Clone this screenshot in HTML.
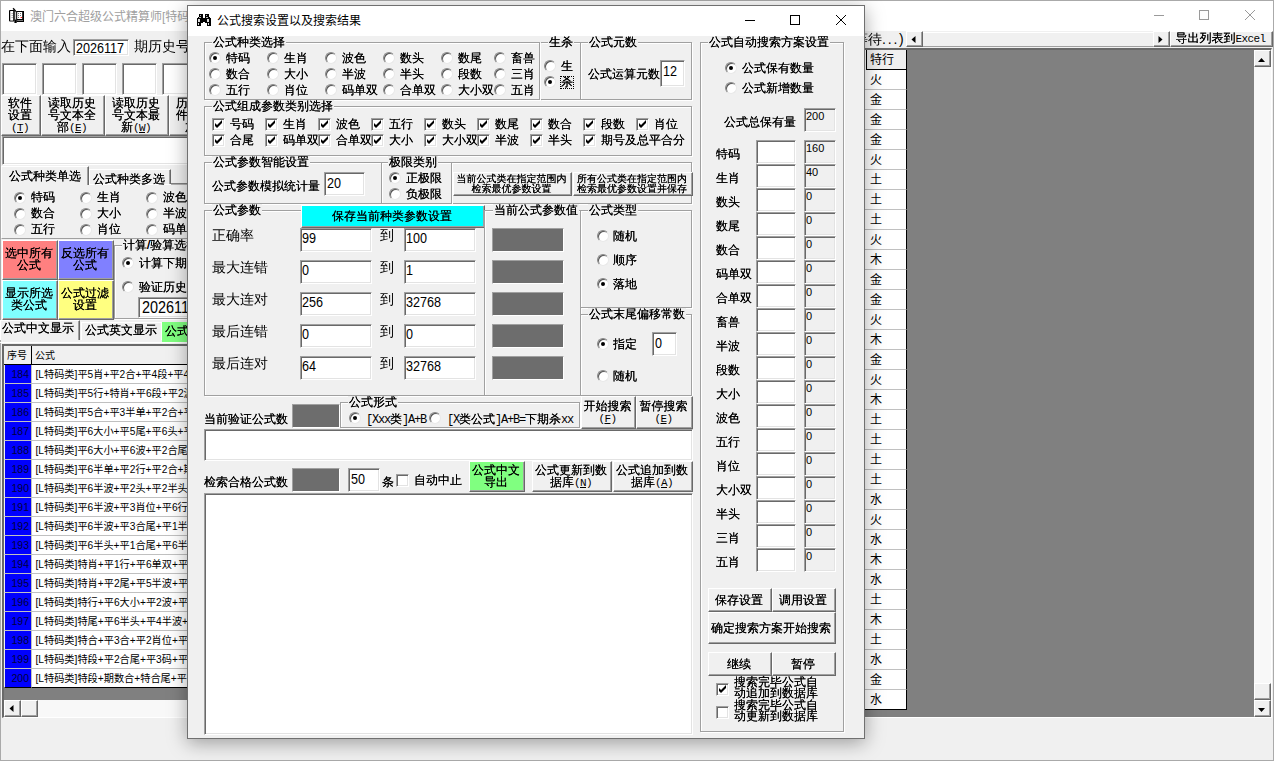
<!DOCTYPE html>
<html lang="zh-CN"><head><meta charset="utf-8"><title>公式搜索设置以及搜索结果</title>
<style>
*{margin:0;padding:0}
html,body{width:1274px;height:761px;overflow:hidden;background:#f0f0f0}
body{position:relative;font-family:"Liberation Sans","WenQuanYi Zen Hei",sans-serif;font-size:12px;color:#000}
.abs,.t,.ed,.bt,.rd,.cb,.gb,.gr,.tab{position:absolute;box-sizing:border-box}
.t{white-space:nowrap}
.s{font-family:"Liberation Sans","WenQuanYi Zen Hei",sans-serif;text-shadow:0 0 0 #000}
.y{font-family:"Liberation Sans","Noto Sans CJK SC",sans-serif}
.n{font-family:"Liberation Sans",sans-serif;display:inline-block;transform:scaleX(.9);transform-origin:0 50%}
.d{font-family:"Liberation Sans",sans-serif}
.l{font-family:"Liberation Mono",monospace;font-size:11px;letter-spacing:-.6px;text-shadow:none}
.m{font-family:"Liberation Mono","WenQuanYi Zen Hei",monospace;letter-spacing:-1.2px;text-shadow:none}
#main{position:absolute;left:0;top:0;width:1274px;height:761px;border:1px solid #aaa;box-sizing:border-box;background:#f0f0f0}
#main>*{margin-left:-1px;margin-top:-1px}
#dlg{position:absolute;left:187px;top:5px;width:678px;height:734px;border:1px solid #707070;box-sizing:border-box;background:#f0f0f0;box-shadow:0 4px 18px rgba(0,0,0,.35)}
.ed{border:1px solid;border-color:#a0a0a0 #fff #fff #a0a0a0;box-shadow:inset 1px 1px 0 #696969,inset -1px -1px 0 #e3e3e3;overflow:hidden}
.gr{background:#6d6d6d;border:1px solid;border-color:#a0a0a0 #fff #fff #a0a0a0}
.bt{padding:0 2px 1px 0;background:#f0f0f0;border:1px solid;border-color:#fff #696969 #696969 #fff;box-shadow:inset -1px -1px 0 #a0a0a0;display:flex;align-items:center;justify-content:center;text-align:center;white-space:nowrap}
.bt>span{display:block}
.bt u{text-decoration:underline}
.rd{width:12px;height:12px;border-radius:50%;background:#fff;border:1px solid;border-color:#888 #e8e8e8 #e8e8e8 #888;box-shadow:inset 1px 1px 0 #555}
.rd.on::after{content:"";position:absolute;left:3px;top:3px;width:4px;height:4px;border-radius:50%;background:#000}
.cb{width:13px;height:13px;background:#fff;border:1px solid;border-color:#a0a0a0 #fff #fff #a0a0a0;box-shadow:inset 1px 1px 0 #696969,inset -1px -1px 0 #e3e3e3}
.cb svg{position:absolute;left:-1px;top:-1px}
.gb{border:1px solid #dcdcdc;box-shadow:1px 1px 0 #fff;width:0;height:0;box-sizing:content-box}
.tab{border:1px solid;border-color:#fff #696969 transparent #fff;border-bottom:none;background:#f0f0f0;box-shadow:inset -1px 0 0 #a0a0a0}
.sbtrack{background:#f8f8f8}
</style></head>
<body>
<div id="main">
<div class="abs" style="left:1px;top:1px;width:1272px;height:30px;background:#fff"></div>
<svg class="abs" style="left:8px;top:7px" width="16" height="16" viewBox="0 0 16 16">
<path d="M5.1 1.2L8 4.6" stroke="#000" stroke-width="1.4"/>
<rect x="8.5" y="4" width="7.5" height="11" fill="#000"/>
<rect x="9.2" y="5" width="5" height="7" fill="#fff"/>
<rect x="10" y="6" width="1" height="1" fill="#777"/><rect x="12" y="6" width="1" height="1" fill="#777"/>
<rect x="10" y="8" width="1" height="1" fill="#777"/><rect x="12" y="8" width="1" height="1" fill="#777"/>
<rect x="10" y="10" width="1" height="1" fill="#777"/><rect x="12.6" y="10" width="1.3" height="1" fill="#f00"/>
<rect x="9.2" y="13.1" width="5.8" height="0.8" fill="#999"/>
<rect x="1" y="3" width="5.6" height="11.5" rx="1" fill="#000"/>
<rect x="2.2" y="4" width="3" height="9.6" fill="#fff"/>
<rect x="3.6" y="6" width="1" height="1" fill="#888"/><rect x="3.6" y="8" width="1" height="1" fill="#888"/><rect x="3.6" y="10" width="1" height="1" fill="#888"/>
<rect x="6.4" y="4" width="2.3" height="12" fill="#000"/>
<rect x="6.9" y="4.6" width="0.9" height="8" fill="#fff"/>
</svg>
<div class="t y" style="left:30px;top:10px;font-size:12px;line-height:12px;color:#a0a0a0;line-height:15px;">澳门六合超级公式精算师[特码</div>
<svg class="abs" style="left:1150px;top:6px" width="112" height="20" viewBox="0 0 112 20" fill="none" stroke="#9a9a9a" stroke-width="1">
<path d="M4 9.5h10"/><rect x="49.5" y="4.5" width="9" height="9"/><path d="M95 4l10 10M105 4l-10 10"/></svg>
<div class="t s" style="left:1px;top:39px;font-size:14px;line-height:14px;text-shadow:none;">在下面输入</div>
<div class="ed" style="left:73px;top:39px;width:56px;height:17px;background:#fff;"><span class="t n" style="left:2px;top:1px;font-size:14px;line-height:14px">2026117</span></div>
<div class="t s" style="left:134px;top:39px;font-size:14px;line-height:14px;text-shadow:none;">期历史号</div>
<div class="ed" style="left:2px;top:63px;width:35px;height:32px;background:#fff;"></div>
<div class="ed" style="left:42px;top:63px;width:35px;height:32px;background:#fff;"></div>
<div class="ed" style="left:82px;top:63px;width:35px;height:32px;background:#fff;"></div>
<div class="ed" style="left:122px;top:63px;width:35px;height:32px;background:#fff;"></div>
<div class="ed" style="left:162px;top:63px;width:35px;height:32px;background:#fff;"></div>
<div class="bt s" style="left:1px;top:95px;width:40px;height:41px;font-size:12px;line-height:12px;"><span>软件<br>设置<br><span class="l">(<u>T</u>)</span></span></div>
<div class="bt s" style="left:41px;top:95px;width:64px;height:41px;font-size:12px;line-height:12px;"><span>读取历史<br>号文本全<br>部<span class="l">(<u>E</u>)</span></span></div>
<div class="bt s" style="left:105px;top:95px;width:64px;height:41px;font-size:12px;line-height:12px;"><span>读取历史<br>号文本最<br>新<span class="l">(<u>W</u>)</span></span></div>
<div class="bt s" style="left:169px;top:95px;width:64px;height:41px;font-size:12px;line-height:12px;"><span>历史号文<br>件文本追<br>加<span class="l">(<u>B</u>)</span></span></div>
<div class="ed" style="left:2px;top:136px;width:300px;height:29px;background:#fff;"></div>
<div class="abs" style="left:1px;top:184px;width:300px;height:55px;border-top:1px solid #fff;border-left:1px solid #fff;border-bottom:1px solid #a0a0a0;box-sizing:border-box"></div>
<div class="tab" style="left:89px;top:169px;width:82px;height:15px"></div>
<div class="abs" style="left:171px;top:183px;width:20px;height:2px;background:#808080;border-bottom:1px solid #b0b0b0"></div>
<div class="tab sel" style="left:1px;top:166px;width:88px;height:19px"></div>
<div class="t s" style="left:9px;top:170px;font-size:12px;line-height:12px;">公式种类单选</div>
<div class="t s" style="left:93px;top:173px;font-size:12px;line-height:12px;">公式种类多选</div>
<div class="rd on" style="left:14px;top:192px"></div>
<div class="t s" style="left:31px;top:191px;font-size:12px;line-height:12px;">特码</div>
<div class="rd" style="left:80px;top:192px"></div>
<div class="t s" style="left:97px;top:191px;font-size:12px;line-height:12px;">生肖</div>
<div class="rd" style="left:146px;top:192px"></div>
<div class="t s" style="left:163px;top:191px;font-size:12px;line-height:12px;">波色</div>
<div class="rd" style="left:14px;top:208px"></div>
<div class="t s" style="left:31px;top:207px;font-size:12px;line-height:12px;">数合</div>
<div class="rd" style="left:80px;top:208px"></div>
<div class="t s" style="left:97px;top:207px;font-size:12px;line-height:12px;">大小</div>
<div class="rd" style="left:146px;top:208px"></div>
<div class="t s" style="left:163px;top:207px;font-size:12px;line-height:12px;">半波</div>
<div class="rd" style="left:14px;top:224px"></div>
<div class="t s" style="left:31px;top:223px;font-size:12px;line-height:12px;">五行</div>
<div class="rd" style="left:80px;top:224px"></div>
<div class="t s" style="left:97px;top:223px;font-size:12px;line-height:12px;">肖位</div>
<div class="rd" style="left:146px;top:224px"></div>
<div class="t s" style="left:163px;top:223px;font-size:12px;line-height:12px;">码单双</div>
<div class="bt s" style="left:2px;top:240px;width:56px;height:40px;font-size:12px;line-height:12px;background:#ff8080;padding-bottom:2px;"><span>选中所有<br>公式</span></div>
<div class="bt s" style="left:58px;top:240px;width:56px;height:40px;font-size:12px;line-height:12px;background:#8080ff;padding-bottom:2px;"><span>反选所有<br>公式</span></div>
<div class="bt s" style="left:2px;top:280px;width:56px;height:40px;font-size:12px;line-height:12px;background:#80ffff;padding-bottom:2px;"><span>显示所选<br>类公式</span></div>
<div class="bt s" style="left:58px;top:280px;width:56px;height:40px;font-size:12px;line-height:12px;background:#ffff80;padding-bottom:2px;"><span>公式过滤<br>设置</span></div>
<div class="abs" style="left:115px;top:246px;width:207px;height:74px;border-top:1px solid #fff;border-left:1px solid #fff;border-bottom:1px solid #fff;border-right:1px solid #fff;"></div>
<div class="abs" style="left:114px;top:245px;width:207px;height:74px;border-top:1px solid #a0a0a0;border-left:1px solid #a0a0a0;border-bottom:1px solid #a0a0a0;border-right:1px solid #a0a0a0;"></div>
<div class="t s" style="left:122px;top:239px;font-size:12px;line-height:12px;height:13px;background:#f0f0f0;padding:0 1px">计算/验算选择</div>
<div class="rd on" style="left:122px;top:257px"></div>
<div class="t s" style="left:139px;top:257px;font-size:12px;line-height:12px;">计算下期</div>
<div class="rd" style="left:122px;top:281px"></div>
<div class="t s" style="left:139px;top:281px;font-size:12px;line-height:12px;">验证历史</div>
<div class="ed" style="left:138px;top:297px;width:80px;height:21px;background:#fff;"><span class="t n" style="left:3px;top:2px;font-size:16px;line-height:16px">2026117</span></div>
<div class="abs" style="left:0px;top:342px;width:300px;height:1px;background:#fff"></div>
<div class="tab" style="left:81px;top:322px;width:81px;height:18px;border-right-color:#fff;box-shadow:none"></div>
<div class="abs" style="left:162px;top:322px;width:60px;height:20px;background:#80ff80"></div>
<div class="tab sel" style="left:0px;top:320px;width:80px;height:20px"></div>
<div class="t s" style="left:2px;top:322px;font-size:12px;line-height:12px;">公式中文显示</div>
<div class="t s" style="left:85px;top:324px;font-size:12px;line-height:12px;">公式英文显示</div>
<div class="t s" style="left:165px;top:325px;font-size:12px;line-height:12px;">公式</div>
<div class="abs" style="left:2px;top:344px;width:300px;height:374px;background:#808080;border-left:2px solid #696969;border-top:2px solid #696969;border-bottom:1px solid #fff;box-sizing:border-box"></div>
<div class="abs" style="left:4px;top:346px;width:28px;height:19px;background:#f0f0f0;border-right:1px solid #000;border-bottom:1px solid #000;box-sizing:border-box"></div>
<div class="abs" style="left:32px;top:346px;width:270px;height:19px;background:#f0f0f0;border-bottom:1px solid #000;box-sizing:border-box"></div>
<div class="t y" style="left:7px;top:349px;font-size:10px;line-height:10px;line-height:13px;">序号</div>
<div class="t y" style="left:35px;top:349px;font-size:10px;line-height:10px;line-height:13px;">公式</div>
<div class="abs" style="left:4px;top:365px;width:28px;height:19px;background:#00f;border-bottom:1px solid #c0c0c0;border-right:1px solid #c0c0c0;border-left:1px solid #f0f0f0;box-sizing:border-box"></div>
<div class="abs" style="left:32px;top:365px;width:270px;height:19px;background:#fff;border-bottom:1px solid #c0c0c0;box-sizing:border-box"></div>
<div class="t y" style="left:10px;top:368px;font-size:10.5px;line-height:10.5px;color:#000040;line-height:13px;width:19px;text-align:right;">184</div>
<div class="t y" style="left:35.5px;top:368px;font-size:10.2px;line-height:10.2px;line-height:13px;">[L特码类]平5肖+平2合+平4段+平4尾</div>
<div class="abs" style="left:4px;top:384px;width:28px;height:19px;background:#00f;border-bottom:1px solid #c0c0c0;border-right:1px solid #c0c0c0;border-left:1px solid #f0f0f0;box-sizing:border-box"></div>
<div class="abs" style="left:32px;top:384px;width:270px;height:19px;background:#fff;border-bottom:1px solid #c0c0c0;box-sizing:border-box"></div>
<div class="t y" style="left:10px;top:387px;font-size:10.5px;line-height:10.5px;color:#000040;line-height:13px;width:19px;text-align:right;">185</div>
<div class="t y" style="left:35.5px;top:387px;font-size:10.2px;line-height:10.2px;line-height:13px;">[L特码类]平5行+特肖+平6段+平2波</div>
<div class="abs" style="left:4px;top:403px;width:28px;height:19px;background:#00f;border-bottom:1px solid #c0c0c0;border-right:1px solid #c0c0c0;border-left:1px solid #f0f0f0;box-sizing:border-box"></div>
<div class="abs" style="left:32px;top:403px;width:270px;height:19px;background:#fff;border-bottom:1px solid #c0c0c0;box-sizing:border-box"></div>
<div class="t y" style="left:10px;top:406px;font-size:10.5px;line-height:10.5px;color:#000040;line-height:13px;width:19px;text-align:right;">186</div>
<div class="t y" style="left:35.5px;top:406px;font-size:10.2px;line-height:10.2px;line-height:13px;">[L特码类]平5合+平3半单+平2合+平</div>
<div class="abs" style="left:4px;top:422px;width:28px;height:19px;background:#00f;border-bottom:1px solid #c0c0c0;border-right:1px solid #c0c0c0;border-left:1px solid #f0f0f0;box-sizing:border-box"></div>
<div class="abs" style="left:32px;top:422px;width:270px;height:19px;background:#fff;border-bottom:1px solid #c0c0c0;box-sizing:border-box"></div>
<div class="t y" style="left:10px;top:425px;font-size:10.5px;line-height:10.5px;color:#000040;line-height:13px;width:19px;text-align:right;">187</div>
<div class="t y" style="left:35.5px;top:425px;font-size:10.2px;line-height:10.2px;line-height:13px;">[L特码类]平6大小+平5尾+平6头+平</div>
<div class="abs" style="left:4px;top:441px;width:28px;height:19px;background:#00f;border-bottom:1px solid #c0c0c0;border-right:1px solid #c0c0c0;border-left:1px solid #f0f0f0;box-sizing:border-box"></div>
<div class="abs" style="left:32px;top:441px;width:270px;height:19px;background:#fff;border-bottom:1px solid #c0c0c0;box-sizing:border-box"></div>
<div class="t y" style="left:10px;top:444px;font-size:10.5px;line-height:10.5px;color:#000040;line-height:13px;width:19px;text-align:right;">188</div>
<div class="t y" style="left:35.5px;top:444px;font-size:10.2px;line-height:10.2px;line-height:13px;">[L特码类]平6大小+平6波+平2合尾</div>
<div class="abs" style="left:4px;top:460px;width:28px;height:19px;background:#00f;border-bottom:1px solid #c0c0c0;border-right:1px solid #c0c0c0;border-left:1px solid #f0f0f0;box-sizing:border-box"></div>
<div class="abs" style="left:32px;top:460px;width:270px;height:19px;background:#fff;border-bottom:1px solid #c0c0c0;box-sizing:border-box"></div>
<div class="t y" style="left:10px;top:463px;font-size:10.5px;line-height:10.5px;color:#000040;line-height:13px;width:19px;text-align:right;">189</div>
<div class="t y" style="left:35.5px;top:463px;font-size:10.2px;line-height:10.2px;line-height:13px;">[L特码类]平6半单+平2行+平2合+期</div>
<div class="abs" style="left:4px;top:479px;width:28px;height:19px;background:#00f;border-bottom:1px solid #c0c0c0;border-right:1px solid #c0c0c0;border-left:1px solid #f0f0f0;box-sizing:border-box"></div>
<div class="abs" style="left:32px;top:479px;width:270px;height:19px;background:#fff;border-bottom:1px solid #c0c0c0;box-sizing:border-box"></div>
<div class="t y" style="left:10px;top:482px;font-size:10.5px;line-height:10.5px;color:#000040;line-height:13px;width:19px;text-align:right;">190</div>
<div class="t y" style="left:35.5px;top:482px;font-size:10.2px;line-height:10.2px;line-height:13px;">[L特码类]平6半波+平2头+平2半头</div>
<div class="abs" style="left:4px;top:498px;width:28px;height:19px;background:#00f;border-bottom:1px solid #c0c0c0;border-right:1px solid #c0c0c0;border-left:1px solid #f0f0f0;box-sizing:border-box"></div>
<div class="abs" style="left:32px;top:498px;width:270px;height:19px;background:#fff;border-bottom:1px solid #c0c0c0;box-sizing:border-box"></div>
<div class="t y" style="left:10px;top:501px;font-size:10.5px;line-height:10.5px;color:#000040;line-height:13px;width:19px;text-align:right;">191</div>
<div class="t y" style="left:35.5px;top:501px;font-size:10.2px;line-height:10.2px;line-height:13px;">[L特码类]平6半波+平3肖位+平6行</div>
<div class="abs" style="left:4px;top:517px;width:28px;height:19px;background:#00f;border-bottom:1px solid #c0c0c0;border-right:1px solid #c0c0c0;border-left:1px solid #f0f0f0;box-sizing:border-box"></div>
<div class="abs" style="left:32px;top:517px;width:270px;height:19px;background:#fff;border-bottom:1px solid #c0c0c0;box-sizing:border-box"></div>
<div class="t y" style="left:10px;top:520px;font-size:10.5px;line-height:10.5px;color:#000040;line-height:13px;width:19px;text-align:right;">192</div>
<div class="t y" style="left:35.5px;top:520px;font-size:10.2px;line-height:10.2px;line-height:13px;">[L特码类]平6半波+平3合尾+平1半</div>
<div class="abs" style="left:4px;top:536px;width:28px;height:19px;background:#00f;border-bottom:1px solid #c0c0c0;border-right:1px solid #c0c0c0;border-left:1px solid #f0f0f0;box-sizing:border-box"></div>
<div class="abs" style="left:32px;top:536px;width:270px;height:19px;background:#fff;border-bottom:1px solid #c0c0c0;box-sizing:border-box"></div>
<div class="t y" style="left:10px;top:539px;font-size:10.5px;line-height:10.5px;color:#000040;line-height:13px;width:19px;text-align:right;">193</div>
<div class="t y" style="left:35.5px;top:539px;font-size:10.2px;line-height:10.2px;line-height:13px;">[L特码类]平6半头+平1合尾+平6半</div>
<div class="abs" style="left:4px;top:555px;width:28px;height:19px;background:#00f;border-bottom:1px solid #c0c0c0;border-right:1px solid #c0c0c0;border-left:1px solid #f0f0f0;box-sizing:border-box"></div>
<div class="abs" style="left:32px;top:555px;width:270px;height:19px;background:#fff;border-bottom:1px solid #c0c0c0;box-sizing:border-box"></div>
<div class="t y" style="left:10px;top:558px;font-size:10.5px;line-height:10.5px;color:#000040;line-height:13px;width:19px;text-align:right;">194</div>
<div class="t y" style="left:35.5px;top:558px;font-size:10.2px;line-height:10.2px;line-height:13px;">[L特码类]特肖+平1行+平6单双+平</div>
<div class="abs" style="left:4px;top:574px;width:28px;height:19px;background:#00f;border-bottom:1px solid #c0c0c0;border-right:1px solid #c0c0c0;border-left:1px solid #f0f0f0;box-sizing:border-box"></div>
<div class="abs" style="left:32px;top:574px;width:270px;height:19px;background:#fff;border-bottom:1px solid #c0c0c0;box-sizing:border-box"></div>
<div class="t y" style="left:10px;top:577px;font-size:10.5px;line-height:10.5px;color:#000040;line-height:13px;width:19px;text-align:right;">195</div>
<div class="t y" style="left:35.5px;top:577px;font-size:10.2px;line-height:10.2px;line-height:13px;">[L特码类]特肖+平2尾+平5半波+平</div>
<div class="abs" style="left:4px;top:593px;width:28px;height:19px;background:#00f;border-bottom:1px solid #c0c0c0;border-right:1px solid #c0c0c0;border-left:1px solid #f0f0f0;box-sizing:border-box"></div>
<div class="abs" style="left:32px;top:593px;width:270px;height:19px;background:#fff;border-bottom:1px solid #c0c0c0;box-sizing:border-box"></div>
<div class="t y" style="left:10px;top:596px;font-size:10.5px;line-height:10.5px;color:#000040;line-height:13px;width:19px;text-align:right;">196</div>
<div class="t y" style="left:35.5px;top:596px;font-size:10.2px;line-height:10.2px;line-height:13px;">[L特码类]特行+平6大小+平2波+平</div>
<div class="abs" style="left:4px;top:612px;width:28px;height:19px;background:#00f;border-bottom:1px solid #c0c0c0;border-right:1px solid #c0c0c0;border-left:1px solid #f0f0f0;box-sizing:border-box"></div>
<div class="abs" style="left:32px;top:612px;width:270px;height:19px;background:#fff;border-bottom:1px solid #c0c0c0;box-sizing:border-box"></div>
<div class="t y" style="left:10px;top:615px;font-size:10.5px;line-height:10.5px;color:#000040;line-height:13px;width:19px;text-align:right;">197</div>
<div class="t y" style="left:35.5px;top:615px;font-size:10.2px;line-height:10.2px;line-height:13px;">[L特码类]特尾+平6半头+平4半波+</div>
<div class="abs" style="left:4px;top:631px;width:28px;height:19px;background:#00f;border-bottom:1px solid #c0c0c0;border-right:1px solid #c0c0c0;border-left:1px solid #f0f0f0;box-sizing:border-box"></div>
<div class="abs" style="left:32px;top:631px;width:270px;height:19px;background:#fff;border-bottom:1px solid #c0c0c0;box-sizing:border-box"></div>
<div class="t y" style="left:10px;top:634px;font-size:10.5px;line-height:10.5px;color:#000040;line-height:13px;width:19px;text-align:right;">198</div>
<div class="t y" style="left:35.5px;top:634px;font-size:10.2px;line-height:10.2px;line-height:13px;">[L特码类]特合+平3合+平2肖位+平</div>
<div class="abs" style="left:4px;top:650px;width:28px;height:19px;background:#00f;border-bottom:1px solid #c0c0c0;border-right:1px solid #c0c0c0;border-left:1px solid #f0f0f0;box-sizing:border-box"></div>
<div class="abs" style="left:32px;top:650px;width:270px;height:19px;background:#fff;border-bottom:1px solid #c0c0c0;box-sizing:border-box"></div>
<div class="t y" style="left:10px;top:653px;font-size:10.5px;line-height:10.5px;color:#000040;line-height:13px;width:19px;text-align:right;">199</div>
<div class="t y" style="left:35.5px;top:653px;font-size:10.2px;line-height:10.2px;line-height:13px;">[L特码类]特段+平2合尾+平3码+平</div>
<div class="abs" style="left:4px;top:669px;width:28px;height:19px;background:#00f;border-bottom:1px solid #000;border-right:1px solid #c0c0c0;border-left:1px solid #f0f0f0;box-sizing:border-box"></div>
<div class="abs" style="left:32px;top:669px;width:270px;height:19px;background:#fff;border-bottom:1px solid #000;box-sizing:border-box"></div>
<div class="t y" style="left:10px;top:672px;font-size:10.5px;line-height:10.5px;color:#000040;line-height:13px;width:19px;text-align:right;">200</div>
<div class="t y" style="left:35.5px;top:672px;font-size:10.2px;line-height:10.2px;line-height:13px;">[L特码类]特段+期数合+特合尾+平</div>
<div class="abs sbtrack" style="left:4px;top:700px;width:300px;height:17px"></div>
<div class="bt s" style="left:4px;top:700px;width:17px;height:17px;font-size:12px;line-height:12px;"><span><svg width="5" height="7" viewBox="0 0 5 7"><path d="M4.5 0v7L0.5 3.5z" fill="#000"/></svg></span></div>
<div class="bt s" style="left:21px;top:700px;width:17px;height:17px;font-size:12px;line-height:12px;"><span></span></div>
<div class="t s" style="left:854px;top:32px;font-size:14px;line-height:14px;text-shadow:none;">等待<span style="letter-spacing:1.8px">...</span>)</div>
<div class="abs" style="left:906px;top:32px;width:264px;height:15px;background:#f0f0f0;border-top:1px solid #fff;border-bottom:1px solid #a0a0a0;box-sizing:border-box"></div>
<div class="bt s" style="left:906px;top:31px;width:17px;height:16px;font-size:12px;line-height:12px;"><span><svg width="5" height="7" viewBox="0 0 5 7"><path d="M4.5 0v7L0.5 3.5z" fill="#000"/></svg></span></div>
<div class="bt s" style="left:1153px;top:31px;width:17px;height:16px;font-size:12px;line-height:12px;"><span><svg width="5" height="7" viewBox="0 0 5 7"><path d="M0.5 0v7L4.5 3.5z" fill="#000"/></svg></span></div>
<div class="bt s" style="left:1170px;top:31px;width:103px;height:16px;font-size:12px;line-height:12px;"><span>导出列表到<span class="l">Excel</span></span></div>
<div class="abs" style="left:860px;top:48px;width:412px;height:670px;background:#808080;border-top:2px solid #696969;border-right:1px solid #fff;border-bottom:1px solid #fff;box-sizing:border-box"></div>
<div class="abs sbtrack" style="left:1254px;top:50px;width:17px;height:666px"></div>
<div class="bt s" style="left:1254px;top:50px;width:17px;height:17px;font-size:12px;line-height:12px;"><span><svg width="7" height="4" viewBox="0 0 7 4"><path d="M0 4h7L3.5 0z" fill="#000"/></svg></span></div>
<div class="bt s" style="left:1254px;top:683px;width:17px;height:17px;font-size:12px;line-height:12px;"><span></span></div>
<div class="bt s" style="left:1254px;top:700px;width:17px;height:17px;font-size:12px;line-height:12px;"><span><svg width="7" height="4" viewBox="0 0 7 4"><path d="M0 0h7L3.5 4z" fill="#000"/></svg></span></div>
<div class="abs" style="left:862px;top:50px;width:45px;height:660px;background:#fff"></div>
<div class="abs" style="left:866px;top:50px;width:41px;height:20px;background:#f0f0f0;border-right:1px solid #000;border-bottom:1px solid #000;border-left:1px solid #000;box-sizing:border-box"></div>
<div class="t y" style="left:870px;top:52px;font-size:12px;line-height:12px;line-height:16px;">特行</div>
<div class="abs" style="left:862px;top:70px;width:45px;height:20px;border-bottom:1px solid #c0c0c0;border-right:1px solid #000;box-sizing:border-box"></div>
<div class="t y" style="left:870px;top:72px;font-size:12px;line-height:12px;line-height:16px;">火</div>
<div class="abs" style="left:862px;top:90px;width:45px;height:20px;border-bottom:1px solid #c0c0c0;border-right:1px solid #000;box-sizing:border-box"></div>
<div class="t y" style="left:870px;top:92px;font-size:12px;line-height:12px;line-height:16px;">金</div>
<div class="abs" style="left:862px;top:110px;width:45px;height:20px;border-bottom:1px solid #c0c0c0;border-right:1px solid #000;box-sizing:border-box"></div>
<div class="t y" style="left:870px;top:112px;font-size:12px;line-height:12px;line-height:16px;">金</div>
<div class="abs" style="left:862px;top:130px;width:45px;height:20px;border-bottom:1px solid #c0c0c0;border-right:1px solid #000;box-sizing:border-box"></div>
<div class="t y" style="left:870px;top:132px;font-size:12px;line-height:12px;line-height:16px;">金</div>
<div class="abs" style="left:862px;top:150px;width:45px;height:20px;border-bottom:1px solid #c0c0c0;border-right:1px solid #000;box-sizing:border-box"></div>
<div class="t y" style="left:870px;top:152px;font-size:12px;line-height:12px;line-height:16px;">火</div>
<div class="abs" style="left:862px;top:170px;width:45px;height:20px;border-bottom:1px solid #c0c0c0;border-right:1px solid #000;box-sizing:border-box"></div>
<div class="t y" style="left:870px;top:172px;font-size:12px;line-height:12px;line-height:16px;">土</div>
<div class="abs" style="left:862px;top:190px;width:45px;height:20px;border-bottom:1px solid #c0c0c0;border-right:1px solid #000;box-sizing:border-box"></div>
<div class="t y" style="left:870px;top:192px;font-size:12px;line-height:12px;line-height:16px;">土</div>
<div class="abs" style="left:862px;top:210px;width:45px;height:20px;border-bottom:1px solid #c0c0c0;border-right:1px solid #000;box-sizing:border-box"></div>
<div class="t y" style="left:870px;top:212px;font-size:12px;line-height:12px;line-height:16px;">土</div>
<div class="abs" style="left:862px;top:230px;width:45px;height:20px;border-bottom:1px solid #c0c0c0;border-right:1px solid #000;box-sizing:border-box"></div>
<div class="t y" style="left:870px;top:232px;font-size:12px;line-height:12px;line-height:16px;">火</div>
<div class="abs" style="left:862px;top:250px;width:45px;height:20px;border-bottom:1px solid #c0c0c0;border-right:1px solid #000;box-sizing:border-box"></div>
<div class="t y" style="left:870px;top:252px;font-size:12px;line-height:12px;line-height:16px;">木</div>
<div class="abs" style="left:862px;top:270px;width:45px;height:20px;border-bottom:1px solid #c0c0c0;border-right:1px solid #000;box-sizing:border-box"></div>
<div class="t y" style="left:870px;top:272px;font-size:12px;line-height:12px;line-height:16px;">金</div>
<div class="abs" style="left:862px;top:290px;width:45px;height:20px;border-bottom:1px solid #c0c0c0;border-right:1px solid #000;box-sizing:border-box"></div>
<div class="t y" style="left:870px;top:292px;font-size:12px;line-height:12px;line-height:16px;">金</div>
<div class="abs" style="left:862px;top:310px;width:45px;height:20px;border-bottom:1px solid #c0c0c0;border-right:1px solid #000;box-sizing:border-box"></div>
<div class="t y" style="left:870px;top:312px;font-size:12px;line-height:12px;line-height:16px;">火</div>
<div class="abs" style="left:862px;top:330px;width:45px;height:20px;border-bottom:1px solid #c0c0c0;border-right:1px solid #000;box-sizing:border-box"></div>
<div class="t y" style="left:870px;top:332px;font-size:12px;line-height:12px;line-height:16px;">木</div>
<div class="abs" style="left:862px;top:350px;width:45px;height:20px;border-bottom:1px solid #c0c0c0;border-right:1px solid #000;box-sizing:border-box"></div>
<div class="t y" style="left:870px;top:352px;font-size:12px;line-height:12px;line-height:16px;">金</div>
<div class="abs" style="left:862px;top:370px;width:45px;height:20px;border-bottom:1px solid #c0c0c0;border-right:1px solid #000;box-sizing:border-box"></div>
<div class="t y" style="left:870px;top:372px;font-size:12px;line-height:12px;line-height:16px;">火</div>
<div class="abs" style="left:862px;top:390px;width:45px;height:20px;border-bottom:1px solid #c0c0c0;border-right:1px solid #000;box-sizing:border-box"></div>
<div class="t y" style="left:870px;top:392px;font-size:12px;line-height:12px;line-height:16px;">木</div>
<div class="abs" style="left:862px;top:410px;width:45px;height:20px;border-bottom:1px solid #c0c0c0;border-right:1px solid #000;box-sizing:border-box"></div>
<div class="t y" style="left:870px;top:412px;font-size:12px;line-height:12px;line-height:16px;">土</div>
<div class="abs" style="left:862px;top:430px;width:45px;height:20px;border-bottom:1px solid #c0c0c0;border-right:1px solid #000;box-sizing:border-box"></div>
<div class="t y" style="left:870px;top:432px;font-size:12px;line-height:12px;line-height:16px;">土</div>
<div class="abs" style="left:862px;top:450px;width:45px;height:20px;border-bottom:1px solid #c0c0c0;border-right:1px solid #000;box-sizing:border-box"></div>
<div class="t y" style="left:870px;top:452px;font-size:12px;line-height:12px;line-height:16px;">土</div>
<div class="abs" style="left:862px;top:470px;width:45px;height:20px;border-bottom:1px solid #c0c0c0;border-right:1px solid #000;box-sizing:border-box"></div>
<div class="t y" style="left:870px;top:472px;font-size:12px;line-height:12px;line-height:16px;">土</div>
<div class="abs" style="left:862px;top:490px;width:45px;height:20px;border-bottom:1px solid #c0c0c0;border-right:1px solid #000;box-sizing:border-box"></div>
<div class="t y" style="left:870px;top:492px;font-size:12px;line-height:12px;line-height:16px;">水</div>
<div class="abs" style="left:862px;top:510px;width:45px;height:20px;border-bottom:1px solid #c0c0c0;border-right:1px solid #000;box-sizing:border-box"></div>
<div class="t y" style="left:870px;top:512px;font-size:12px;line-height:12px;line-height:16px;">火</div>
<div class="abs" style="left:862px;top:530px;width:45px;height:20px;border-bottom:1px solid #c0c0c0;border-right:1px solid #000;box-sizing:border-box"></div>
<div class="t y" style="left:870px;top:532px;font-size:12px;line-height:12px;line-height:16px;">水</div>
<div class="abs" style="left:862px;top:550px;width:45px;height:20px;border-bottom:1px solid #c0c0c0;border-right:1px solid #000;box-sizing:border-box"></div>
<div class="t y" style="left:870px;top:552px;font-size:12px;line-height:12px;line-height:16px;">木</div>
<div class="abs" style="left:862px;top:570px;width:45px;height:20px;border-bottom:1px solid #c0c0c0;border-right:1px solid #000;box-sizing:border-box"></div>
<div class="t y" style="left:870px;top:572px;font-size:12px;line-height:12px;line-height:16px;">水</div>
<div class="abs" style="left:862px;top:590px;width:45px;height:20px;border-bottom:1px solid #c0c0c0;border-right:1px solid #000;box-sizing:border-box"></div>
<div class="t y" style="left:870px;top:592px;font-size:12px;line-height:12px;line-height:16px;">土</div>
<div class="abs" style="left:862px;top:610px;width:45px;height:20px;border-bottom:1px solid #c0c0c0;border-right:1px solid #000;box-sizing:border-box"></div>
<div class="t y" style="left:870px;top:612px;font-size:12px;line-height:12px;line-height:16px;">木</div>
<div class="abs" style="left:862px;top:630px;width:45px;height:20px;border-bottom:1px solid #c0c0c0;border-right:1px solid #000;box-sizing:border-box"></div>
<div class="t y" style="left:870px;top:632px;font-size:12px;line-height:12px;line-height:16px;">土</div>
<div class="abs" style="left:862px;top:650px;width:45px;height:20px;border-bottom:1px solid #c0c0c0;border-right:1px solid #000;box-sizing:border-box"></div>
<div class="t y" style="left:870px;top:652px;font-size:12px;line-height:12px;line-height:16px;">水</div>
<div class="abs" style="left:862px;top:670px;width:45px;height:20px;border-bottom:1px solid #c0c0c0;border-right:1px solid #000;box-sizing:border-box"></div>
<div class="t y" style="left:870px;top:672px;font-size:12px;line-height:12px;line-height:16px;">金</div>
<div class="abs" style="left:862px;top:690px;width:45px;height:20px;border-bottom:1px solid #000;border-right:1px solid #000;box-sizing:border-box"></div>
<div class="t y" style="left:870px;top:692px;font-size:12px;line-height:12px;line-height:16px;">水</div>
</div>
<div id="dlg">
<div class="abs" style="left:0;top:0;width:676px;height:30px;background:#fff"></div>
<svg class="abs" style="left:9px;top:8px" width="14" height="12" viewBox="0 0 14 12" shape-rendering="crispEdges">
<g fill="#000"><rect x="2" y="0" width="4" height="4"/><rect x="8" y="0" width="4" height="4"/>
<rect x="1" y="3" width="5" height="2"/><rect x="8" y="3" width="5" height="2"/>
<rect x="0" y="4" width="14" height="4"/><rect x="0" y="8" width="6" height="1"/><rect x="8" y="8" width="6" height="1"/>
<rect x="0" y="9" width="4" height="3"/><rect x="10" y="9" width="4" height="3"/></g>
<g fill="#bbb"><rect x="3" y="1" width="1" height="1"/><rect x="9" y="1" width="1" height="1"/>
<rect x="2" y="3" width="2" height="1"/><rect x="9" y="3" width="2" height="1"/></g>
<g fill="#ddd"><rect x="1" y="5" width="2" height="3"/><rect x="10" y="5" width="2" height="3"/>
<rect x="1" y="9" width="1" height="2"/><rect x="11" y="9" width="1" height="2"/></g>
</svg>
<div class="t y" style="left:29px;top:7px;font-size:12px;line-height:12px;color:#000;line-height:16px;">公式搜索设置以及搜索结果</div>
<svg class="abs" style="left:553px;top:4px" width="112" height="20" viewBox="0 0 112 20" fill="none" stroke="#000" stroke-width="1">
<path d="M4 10.5h10"/><rect x="49.5" y="5.5" width="9" height="9"/><path d="M95 5l10 10M105 5l-10 10"/></svg>
</div>
<div class="abs" style="left:205px;top:43px;width:336px;height:58px;border-top:1px solid #fff;border-left:1px solid #fff;border-bottom:1px solid #fff;border-right:1px solid #fff;"></div>
<div class="abs" style="left:204px;top:42px;width:336px;height:58px;border-top:1px solid #a0a0a0;border-left:1px solid #a0a0a0;border-bottom:1px solid #a0a0a0;border-right:1px solid #a0a0a0;"></div>
<div class="t s" style="left:212px;top:36px;font-size:12px;line-height:12px;height:13px;background:#f0f0f0;padding:0 1px">公式种类选择</div>
<div class="rd on" style="left:209px;top:52px"></div>
<div class="t s" style="left:226px;top:52px;font-size:12px;line-height:12px;">特码</div>
<div class="rd" style="left:267px;top:52px"></div>
<div class="t s" style="left:284px;top:52px;font-size:12px;line-height:12px;">生肖</div>
<div class="rd" style="left:325px;top:52px"></div>
<div class="t s" style="left:342px;top:52px;font-size:12px;line-height:12px;">波色</div>
<div class="rd" style="left:383px;top:52px"></div>
<div class="t s" style="left:400px;top:52px;font-size:12px;line-height:12px;">数头</div>
<div class="rd" style="left:441px;top:52px"></div>
<div class="t s" style="left:458px;top:52px;font-size:12px;line-height:12px;">数尾</div>
<div class="rd" style="left:494px;top:52px"></div>
<div class="t s" style="left:511px;top:52px;font-size:12px;line-height:12px;">畜兽</div>
<div class="rd" style="left:209px;top:68px"></div>
<div class="t s" style="left:226px;top:68px;font-size:12px;line-height:12px;">数合</div>
<div class="rd" style="left:267px;top:68px"></div>
<div class="t s" style="left:284px;top:68px;font-size:12px;line-height:12px;">大小</div>
<div class="rd" style="left:325px;top:68px"></div>
<div class="t s" style="left:342px;top:68px;font-size:12px;line-height:12px;">半波</div>
<div class="rd" style="left:383px;top:68px"></div>
<div class="t s" style="left:400px;top:68px;font-size:12px;line-height:12px;">半头</div>
<div class="rd" style="left:441px;top:68px"></div>
<div class="t s" style="left:458px;top:68px;font-size:12px;line-height:12px;">段数</div>
<div class="rd" style="left:494px;top:68px"></div>
<div class="t s" style="left:511px;top:68px;font-size:12px;line-height:12px;">三肖</div>
<div class="rd" style="left:209px;top:84px"></div>
<div class="t s" style="left:226px;top:84px;font-size:12px;line-height:12px;">五行</div>
<div class="rd" style="left:267px;top:84px"></div>
<div class="t s" style="left:284px;top:84px;font-size:12px;line-height:12px;">肖位</div>
<div class="rd" style="left:325px;top:84px"></div>
<div class="t s" style="left:342px;top:84px;font-size:12px;line-height:12px;">码单双</div>
<div class="rd" style="left:383px;top:84px"></div>
<div class="t s" style="left:400px;top:84px;font-size:12px;line-height:12px;">合单双</div>
<div class="rd" style="left:441px;top:84px"></div>
<div class="t s" style="left:458px;top:84px;font-size:12px;line-height:12px;">大小双</div>
<div class="rd" style="left:494px;top:84px"></div>
<div class="t s" style="left:511px;top:84px;font-size:12px;line-height:12px;">五肖</div>
<div class="abs" style="left:542px;top:43px;width:40px;height:58px;border-top:1px solid #fff;border-bottom:1px solid #fff;"></div>
<div class="abs" style="left:541px;top:42px;width:40px;height:58px;border-top:1px solid #a0a0a0;border-bottom:1px solid #a0a0a0;"></div>
<div class="t s" style="left:548px;top:36px;font-size:12px;line-height:12px;height:13px;background:#f0f0f0;padding:0 1px">生杀</div>
<div class="rd" style="left:544px;top:60px"></div>
<div class="t s" style="left:561px;top:60px;font-size:12px;line-height:12px;">生</div>
<div class="rd on" style="left:544px;top:76px"></div>
<div class="t s" style="left:561px;top:76px;font-size:12px;line-height:12px;">杀</div>
<div class="abs" style="left:560px;top:76px;width:14px;height:13px;border:1px dotted #000"></div>
<div class="abs" style="left:581px;top:43px;width:112px;height:58px;border-top:1px solid #fff;border-left:1px solid #fff;border-bottom:1px solid #fff;border-right:1px solid #fff;"></div>
<div class="abs" style="left:580px;top:42px;width:112px;height:58px;border-top:1px solid #a0a0a0;border-left:1px solid #a0a0a0;border-bottom:1px solid #a0a0a0;border-right:1px solid #a0a0a0;"></div>
<div class="t s" style="left:588px;top:36px;font-size:12px;line-height:12px;height:13px;background:#f0f0f0;padding:0 1px">公式元数</div>
<div class="t s" style="left:588px;top:68px;font-size:12px;line-height:12px;">公式运算元数</div>
<div class="ed" style="left:660px;top:60px;width:25px;height:27px;background:#fff;"><span class="t n" style="left:2px;top:3px;font-size:14px;line-height:14px">12</span></div>
<div class="abs" style="left:205px;top:107px;width:488px;height:50px;border-top:1px solid #fff;border-left:1px solid #fff;border-bottom:1px solid #fff;border-right:1px solid #fff;"></div>
<div class="abs" style="left:204px;top:106px;width:488px;height:50px;border-top:1px solid #a0a0a0;border-left:1px solid #a0a0a0;border-bottom:1px solid #a0a0a0;border-right:1px solid #a0a0a0;"></div>
<div class="t s" style="left:212px;top:100px;font-size:12px;line-height:12px;height:13px;background:#f0f0f0;padding:0 1px">公式组成参数类别选择</div>
<div class="cb" style="left:212px;top:118px"><svg width="13" height="13" viewBox="0 0 13 13"><path d="M3 5v3l2 2 5-5V2L5 7z" fill="#000"/></svg></div>
<div class="t s" style="left:230px;top:118px;font-size:12px;line-height:12px;">号码</div>
<div class="cb" style="left:265px;top:118px"><svg width="13" height="13" viewBox="0 0 13 13"><path d="M3 5v3l2 2 5-5V2L5 7z" fill="#000"/></svg></div>
<div class="t s" style="left:283px;top:118px;font-size:12px;line-height:12px;">生肖</div>
<div class="cb" style="left:318px;top:118px"><svg width="13" height="13" viewBox="0 0 13 13"><path d="M3 5v3l2 2 5-5V2L5 7z" fill="#000"/></svg></div>
<div class="t s" style="left:336px;top:118px;font-size:12px;line-height:12px;">波色</div>
<div class="cb" style="left:371px;top:118px"><svg width="13" height="13" viewBox="0 0 13 13"><path d="M3 5v3l2 2 5-5V2L5 7z" fill="#000"/></svg></div>
<div class="t s" style="left:389px;top:118px;font-size:12px;line-height:12px;">五行</div>
<div class="cb" style="left:424px;top:118px"><svg width="13" height="13" viewBox="0 0 13 13"><path d="M3 5v3l2 2 5-5V2L5 7z" fill="#000"/></svg></div>
<div class="t s" style="left:442px;top:118px;font-size:12px;line-height:12px;">数头</div>
<div class="cb" style="left:477px;top:118px"><svg width="13" height="13" viewBox="0 0 13 13"><path d="M3 5v3l2 2 5-5V2L5 7z" fill="#000"/></svg></div>
<div class="t s" style="left:495px;top:118px;font-size:12px;line-height:12px;">数尾</div>
<div class="cb" style="left:530px;top:118px"><svg width="13" height="13" viewBox="0 0 13 13"><path d="M3 5v3l2 2 5-5V2L5 7z" fill="#000"/></svg></div>
<div class="t s" style="left:548px;top:118px;font-size:12px;line-height:12px;">数合</div>
<div class="cb" style="left:583px;top:118px"><svg width="13" height="13" viewBox="0 0 13 13"><path d="M3 5v3l2 2 5-5V2L5 7z" fill="#000"/></svg></div>
<div class="t s" style="left:601px;top:118px;font-size:12px;line-height:12px;">段数</div>
<div class="cb" style="left:636px;top:118px"><svg width="13" height="13" viewBox="0 0 13 13"><path d="M3 5v3l2 2 5-5V2L5 7z" fill="#000"/></svg></div>
<div class="t s" style="left:654px;top:118px;font-size:12px;line-height:12px;">肖位</div>
<div class="cb" style="left:212px;top:134px"><svg width="13" height="13" viewBox="0 0 13 13"><path d="M3 5v3l2 2 5-5V2L5 7z" fill="#000"/></svg></div>
<div class="t s" style="left:230px;top:134px;font-size:12px;line-height:12px;">合尾</div>
<div class="cb" style="left:265px;top:134px"><svg width="13" height="13" viewBox="0 0 13 13"><path d="M3 5v3l2 2 5-5V2L5 7z" fill="#000"/></svg></div>
<div class="t s" style="left:283px;top:134px;font-size:12px;line-height:12px;">码单双</div>
<div class="cb" style="left:318px;top:134px"><svg width="13" height="13" viewBox="0 0 13 13"><path d="M3 5v3l2 2 5-5V2L5 7z" fill="#000"/></svg></div>
<div class="t s" style="left:336px;top:134px;font-size:12px;line-height:12px;">合单双</div>
<div class="cb" style="left:371px;top:134px"><svg width="13" height="13" viewBox="0 0 13 13"><path d="M3 5v3l2 2 5-5V2L5 7z" fill="#000"/></svg></div>
<div class="t s" style="left:389px;top:134px;font-size:12px;line-height:12px;">大小</div>
<div class="cb" style="left:424px;top:134px"><svg width="13" height="13" viewBox="0 0 13 13"><path d="M3 5v3l2 2 5-5V2L5 7z" fill="#000"/></svg></div>
<div class="t s" style="left:442px;top:134px;font-size:12px;line-height:12px;">大小双</div>
<div class="cb" style="left:477px;top:134px"><svg width="13" height="13" viewBox="0 0 13 13"><path d="M3 5v3l2 2 5-5V2L5 7z" fill="#000"/></svg></div>
<div class="t s" style="left:495px;top:134px;font-size:12px;line-height:12px;">半波</div>
<div class="cb" style="left:530px;top:134px"><svg width="13" height="13" viewBox="0 0 13 13"><path d="M3 5v3l2 2 5-5V2L5 7z" fill="#000"/></svg></div>
<div class="t s" style="left:548px;top:134px;font-size:12px;line-height:12px;">半头</div>
<div class="cb" style="left:583px;top:134px"><svg width="13" height="13" viewBox="0 0 13 13"><path d="M3 5v3l2 2 5-5V2L5 7z" fill="#000"/></svg></div>
<div class="t s" style="left:601px;top:134px;font-size:12px;line-height:12px;">期号及总平合分</div>
<div class="abs" style="left:205px;top:163px;width:488px;height:42px;border-top:1px solid #fff;border-left:1px solid #fff;border-bottom:1px solid #fff;border-right:1px solid #fff;"></div>
<div class="abs" style="left:204px;top:162px;width:488px;height:42px;border-top:1px solid #a0a0a0;border-left:1px solid #a0a0a0;border-bottom:1px solid #a0a0a0;border-right:1px solid #a0a0a0;"></div>
<div class="t s" style="left:212px;top:156px;font-size:12px;line-height:12px;height:13px;background:#f0f0f0;padding:0 1px">公式参数智能设置</div>
<div class="t s" style="left:212px;top:180px;font-size:12px;line-height:12px;">公式参数模拟统计量</div>
<div class="ed" style="left:324px;top:172px;width:41px;height:24px;background:#fff;"><span class="t n" style="left:2px;top:3px;font-size:14px;line-height:14px">20</span></div>
<div class="abs" style="left:382px;top:163px;width:71px;height:42px;border-top:1px solid #fff;border-left:1px solid #fff;border-bottom:1px solid #fff;border-right:1px solid #fff;"></div>
<div class="abs" style="left:381px;top:162px;width:71px;height:42px;border-top:1px solid #a0a0a0;border-left:1px solid #a0a0a0;border-bottom:1px solid #a0a0a0;border-right:1px solid #a0a0a0;"></div>
<div class="t s" style="left:388px;top:156px;font-size:12px;line-height:12px;height:13px;background:#f0f0f0;padding:0 1px">极限类别</div>
<div class="rd on" style="left:389px;top:172px"></div>
<div class="t s" style="left:406px;top:172px;font-size:12px;line-height:12px;">正极限</div>
<div class="rd" style="left:389px;top:188px"></div>
<div class="t s" style="left:406px;top:188px;font-size:12px;line-height:12px;">负极限</div>
<div class="bt s" style="left:453px;top:172px;width:119px;height:24px;font-size:10px;line-height:10px;font-weight:bold;"><span>当前公式类在指定范围内<br>检索最优参数设置</span></div>
<div class="bt s" style="left:573px;top:172px;width:120px;height:24px;font-size:10px;line-height:10px;font-weight:bold;"><span>所有公式类在指定范围内<br>检索最优参数设置并保存</span></div>
<div class="abs" style="left:205px;top:211px;width:281px;height:186px;border-top:1px solid #fff;border-left:1px solid #fff;border-bottom:1px solid #fff;border-right:1px solid #fff;"></div>
<div class="abs" style="left:204px;top:210px;width:281px;height:186px;border-top:1px solid #a0a0a0;border-left:1px solid #a0a0a0;border-bottom:1px solid #a0a0a0;border-right:1px solid #a0a0a0;"></div>
<div class="t s" style="left:212px;top:204px;font-size:12px;line-height:12px;height:13px;background:#f0f0f0;padding:0 1px">公式参数</div>
<div class="bt s" style="left:301px;top:205px;width:184px;height:23px;font-size:12px;line-height:12px;background:#00ffff;"><span>保存当前种类参数设置</span></div>
<div class="abs" style="left:485px;top:211px;width:97px;height:186px;border-top:1px solid #fff;border-left:1px solid #fff;border-bottom:1px solid #fff;border-right:1px solid #fff;"></div>
<div class="abs" style="left:484px;top:210px;width:97px;height:186px;border-top:1px solid #a0a0a0;border-left:1px solid #a0a0a0;border-bottom:1px solid #a0a0a0;border-right:1px solid #a0a0a0;"></div>
<div class="t s" style="left:493px;top:204px;font-size:12px;line-height:12px;height:13px;background:#f0f0f0;padding:0 1px">当前公式参数值</div>
<div class="t s" style="left:212px;top:228px;font-size:14px;line-height:14px;text-shadow:none;">正确率</div>
<div class="ed" style="left:300px;top:228px;width:72px;height:24px;background:#fff;"><span class="t n" style="left:1px;top:2px;font-size:14px;line-height:14px">99</span></div>
<div class="t s" style="left:380px;top:228px;font-size:14px;line-height:14px;text-shadow:none;">到</div>
<div class="ed" style="left:404px;top:228px;width:72px;height:24px;background:#fff;"><span class="t n" style="left:1px;top:2px;font-size:14px;line-height:14px">100</span></div>
<div class="gr" style="left:492px;top:228px;width:72px;height:24px;"></div>
<div class="t s" style="left:212px;top:260px;font-size:14px;line-height:14px;text-shadow:none;">最大连错</div>
<div class="ed" style="left:300px;top:260px;width:72px;height:24px;background:#fff;"><span class="t n" style="left:1px;top:2px;font-size:14px;line-height:14px">0</span></div>
<div class="t s" style="left:380px;top:260px;font-size:14px;line-height:14px;text-shadow:none;">到</div>
<div class="ed" style="left:404px;top:260px;width:72px;height:24px;background:#fff;"><span class="t n" style="left:1px;top:2px;font-size:14px;line-height:14px">1</span></div>
<div class="gr" style="left:492px;top:260px;width:72px;height:24px;"></div>
<div class="t s" style="left:212px;top:292px;font-size:14px;line-height:14px;text-shadow:none;">最大连对</div>
<div class="ed" style="left:300px;top:292px;width:72px;height:24px;background:#fff;"><span class="t n" style="left:1px;top:2px;font-size:14px;line-height:14px">256</span></div>
<div class="t s" style="left:380px;top:292px;font-size:14px;line-height:14px;text-shadow:none;">到</div>
<div class="ed" style="left:404px;top:292px;width:72px;height:24px;background:#fff;"><span class="t n" style="left:1px;top:2px;font-size:14px;line-height:14px">32768</span></div>
<div class="gr" style="left:492px;top:292px;width:72px;height:24px;"></div>
<div class="t s" style="left:212px;top:324px;font-size:14px;line-height:14px;text-shadow:none;">最后连错</div>
<div class="ed" style="left:300px;top:324px;width:72px;height:24px;background:#fff;"><span class="t n" style="left:1px;top:2px;font-size:14px;line-height:14px">0</span></div>
<div class="t s" style="left:380px;top:324px;font-size:14px;line-height:14px;text-shadow:none;">到</div>
<div class="ed" style="left:404px;top:324px;width:72px;height:24px;background:#fff;"><span class="t n" style="left:1px;top:2px;font-size:14px;line-height:14px">0</span></div>
<div class="gr" style="left:492px;top:324px;width:72px;height:24px;"></div>
<div class="t s" style="left:212px;top:356px;font-size:14px;line-height:14px;text-shadow:none;">最后连对</div>
<div class="ed" style="left:300px;top:356px;width:72px;height:24px;background:#fff;"><span class="t n" style="left:1px;top:2px;font-size:14px;line-height:14px">64</span></div>
<div class="t s" style="left:380px;top:356px;font-size:14px;line-height:14px;text-shadow:none;">到</div>
<div class="ed" style="left:404px;top:356px;width:72px;height:24px;background:#fff;"><span class="t n" style="left:1px;top:2px;font-size:14px;line-height:14px">32768</span></div>
<div class="gr" style="left:492px;top:356px;width:72px;height:24px;"></div>
<div class="abs" style="left:581px;top:211px;width:112px;height:98px;border-top:1px solid #fff;border-left:1px solid #fff;border-bottom:1px solid #fff;border-right:1px solid #fff;"></div>
<div class="abs" style="left:580px;top:210px;width:112px;height:98px;border-top:1px solid #a0a0a0;border-left:1px solid #a0a0a0;border-bottom:1px solid #a0a0a0;border-right:1px solid #a0a0a0;"></div>
<div class="t s" style="left:588px;top:204px;font-size:12px;line-height:12px;height:13px;background:#f0f0f0;padding:0 1px">公式类型</div>
<div class="rd" style="left:597px;top:230px"></div>
<div class="t s" style="left:613px;top:230px;font-size:12px;line-height:12px;">随机</div>
<div class="rd" style="left:597px;top:254px"></div>
<div class="t s" style="left:613px;top:254px;font-size:12px;line-height:12px;">顺序</div>
<div class="rd on" style="left:597px;top:278px"></div>
<div class="t s" style="left:613px;top:278px;font-size:12px;line-height:12px;">落地</div>
<div class="abs" style="left:581px;top:315px;width:112px;height:82px;border-top:1px solid #fff;border-left:1px solid #fff;border-bottom:1px solid #fff;border-right:1px solid #fff;"></div>
<div class="abs" style="left:580px;top:314px;width:112px;height:82px;border-top:1px solid #a0a0a0;border-left:1px solid #a0a0a0;border-bottom:1px solid #a0a0a0;border-right:1px solid #a0a0a0;"></div>
<div class="t s" style="left:588px;top:308px;font-size:12px;line-height:12px;height:13px;background:#f0f0f0;padding:0 1px">公式末尾偏移常数</div>
<div class="rd on" style="left:597px;top:338px"></div>
<div class="t s" style="left:613px;top:338px;font-size:12px;line-height:12px;">指定</div>
<div class="ed" style="left:652px;top:332px;width:25px;height:24px;background:#fff;"><span class="t n" style="left:2px;top:3px;font-size:14px;line-height:14px">0</span></div>
<div class="rd" style="left:597px;top:370px"></div>
<div class="t s" style="left:613px;top:370px;font-size:12px;line-height:12px;">随机</div>
<div class="t s" style="left:204px;top:413px;font-size:12px;line-height:12px;">当前验证公式数</div>
<div class="gr" style="left:292px;top:404px;width:48px;height:24px;"></div>
<div class="abs" style="left:341px;top:403px;width:240px;height:26px;border-top:1px solid #fff;border-left:1px solid #fff;border-bottom:1px solid #fff;border-right:1px solid #fff;"></div>
<div class="abs" style="left:340px;top:402px;width:240px;height:26px;border-top:1px solid #a0a0a0;border-left:1px solid #a0a0a0;border-bottom:1px solid #a0a0a0;border-right:1px solid #a0a0a0;"></div>
<div class="t s" style="left:348px;top:396px;font-size:12px;line-height:12px;height:13px;background:#f0f0f0;padding:0 1px">公式形式</div>
<div class="rd on" style="left:349px;top:412px"></div>
<div class="t s" style="left:366px;top:413px;font-size:12px;line-height:12px;"><span class="m">[Xxx</span>类<span class="m">]A+B</span></div>
<div class="rd" style="left:429px;top:412px"></div>
<div class="t s" style="left:447px;top:413px;font-size:12px;line-height:12px;"><span class="m">[X</span>类公式<span class="m">]A+B=</span>下期杀<span class="m">xx</span></div>
<div class="bt s" style="left:581px;top:396px;width:55px;height:33px;font-size:12px;line-height:12px;"><span>开始搜索<br><span class="l">(<u>F</u>)</span></span></div>
<div class="bt s" style="left:636px;top:396px;width:57px;height:33px;font-size:12px;line-height:12px;"><span>暂停搜索<br><span class="l">(<u>E</u>)</span></span></div>
<div class="ed" style="left:204px;top:429px;width:489px;height:32px;background:#fff;"></div>
<div class="t s" style="left:204px;top:476px;font-size:12px;line-height:12px;">检索合格公式数</div>
<div class="gr" style="left:292px;top:468px;width:48px;height:24px;"></div>
<div class="ed" style="left:348px;top:468px;width:32px;height:24px;background:#fff;"><span class="t n" style="left:2px;top:3px;font-size:14px;line-height:14px">50</span></div>
<div class="t s" style="left:382px;top:476px;font-size:12px;line-height:12px;">条</div>
<div class="cb" style="left:396px;top:474px"></div>
<div class="t s" style="left:414px;top:474px;font-size:12px;line-height:12px;">自动中止</div>
<div class="bt s" style="left:469px;top:461px;width:56px;height:31px;font-size:12px;line-height:12px;background:#80ff80;"><span>公式中文<br>导出</span></div>
<div class="bt s" style="left:532px;top:461px;width:80px;height:31px;font-size:12px;line-height:12px;"><span>公式更新到数<br>据库<span class="l">(<u>N</u>)</span></span></div>
<div class="bt s" style="left:613px;top:461px;width:80px;height:31px;font-size:12px;line-height:12px;"><span>公式追加到数<br>据库<span class="l">(<u>A</u>)</span></span></div>
<div class="ed" style="left:204px;top:493px;width:489px;height:242px;background:#fff;"></div>
<div class="abs" style="left:701px;top:43px;width:144px;height:690px;border-top:1px solid #fff;border-left:1px solid #fff;border-bottom:1px solid #fff;border-right:1px solid #fff;"></div>
<div class="abs" style="left:700px;top:42px;width:144px;height:690px;border-top:1px solid #a0a0a0;border-left:1px solid #a0a0a0;border-bottom:1px solid #a0a0a0;border-right:1px solid #a0a0a0;"></div>
<div class="t s" style="left:708px;top:36px;font-size:12px;line-height:12px;height:13px;background:#f0f0f0;padding:0 1px">公式自动搜索方案设置</div>
<div class="rd on" style="left:725px;top:62px"></div>
<div class="t s" style="left:742px;top:62px;font-size:12px;line-height:12px;">公式保有数量</div>
<div class="rd" style="left:725px;top:82px"></div>
<div class="t s" style="left:742px;top:82px;font-size:12px;line-height:12px;">公式新增数量</div>
<div class="t s" style="left:724px;top:116px;font-size:12px;line-height:12px;">公式总保有量</div>
<div class="ed" style="left:804px;top:108px;width:32px;height:24px;background:#f0f0f0;"><span class="t d" style="left:1px;top:2px;font-size:11px;line-height:11px">200</span></div>
<div class="t s" style="left:716px;top:148px;font-size:12px;line-height:12px;">特码</div>
<div class="ed" style="left:756px;top:140px;width:40px;height:24px;background:#fff;"></div>
<div class="ed" style="left:804px;top:140px;width:32px;height:24px;background:#f0f0f0;"><span class="t d" style="left:1px;top:2px;font-size:11px;line-height:11px">160</span></div>
<div class="t s" style="left:716px;top:172px;font-size:12px;line-height:12px;">生肖</div>
<div class="ed" style="left:756px;top:164px;width:40px;height:24px;background:#fff;"></div>
<div class="ed" style="left:804px;top:164px;width:32px;height:24px;background:#f0f0f0;"><span class="t d" style="left:1px;top:2px;font-size:11px;line-height:11px">40</span></div>
<div class="t s" style="left:716px;top:196px;font-size:12px;line-height:12px;">数头</div>
<div class="ed" style="left:756px;top:188px;width:40px;height:24px;background:#fff;"></div>
<div class="ed" style="left:804px;top:188px;width:32px;height:24px;background:#f0f0f0;"><span class="t d" style="left:1px;top:2px;font-size:11px;line-height:11px">0</span></div>
<div class="t s" style="left:716px;top:220px;font-size:12px;line-height:12px;">数尾</div>
<div class="ed" style="left:756px;top:212px;width:40px;height:24px;background:#fff;"></div>
<div class="ed" style="left:804px;top:212px;width:32px;height:24px;background:#f0f0f0;"><span class="t d" style="left:1px;top:2px;font-size:11px;line-height:11px">0</span></div>
<div class="t s" style="left:716px;top:244px;font-size:12px;line-height:12px;">数合</div>
<div class="ed" style="left:756px;top:236px;width:40px;height:24px;background:#fff;"></div>
<div class="ed" style="left:804px;top:236px;width:32px;height:24px;background:#f0f0f0;"><span class="t d" style="left:1px;top:2px;font-size:11px;line-height:11px">0</span></div>
<div class="t s" style="left:716px;top:268px;font-size:12px;line-height:12px;">码单双</div>
<div class="ed" style="left:756px;top:260px;width:40px;height:24px;background:#fff;"></div>
<div class="ed" style="left:804px;top:260px;width:32px;height:24px;background:#f0f0f0;"><span class="t d" style="left:1px;top:2px;font-size:11px;line-height:11px">0</span></div>
<div class="t s" style="left:716px;top:292px;font-size:12px;line-height:12px;">合单双</div>
<div class="ed" style="left:756px;top:284px;width:40px;height:24px;background:#fff;"></div>
<div class="ed" style="left:804px;top:284px;width:32px;height:24px;background:#f0f0f0;"><span class="t d" style="left:1px;top:2px;font-size:11px;line-height:11px">0</span></div>
<div class="t s" style="left:716px;top:316px;font-size:12px;line-height:12px;">畜兽</div>
<div class="ed" style="left:756px;top:308px;width:40px;height:24px;background:#fff;"></div>
<div class="ed" style="left:804px;top:308px;width:32px;height:24px;background:#f0f0f0;"><span class="t d" style="left:1px;top:2px;font-size:11px;line-height:11px">0</span></div>
<div class="t s" style="left:716px;top:340px;font-size:12px;line-height:12px;">半波</div>
<div class="ed" style="left:756px;top:332px;width:40px;height:24px;background:#fff;"></div>
<div class="ed" style="left:804px;top:332px;width:32px;height:24px;background:#f0f0f0;"><span class="t d" style="left:1px;top:2px;font-size:11px;line-height:11px">0</span></div>
<div class="t s" style="left:716px;top:364px;font-size:12px;line-height:12px;">段数</div>
<div class="ed" style="left:756px;top:356px;width:40px;height:24px;background:#fff;"></div>
<div class="ed" style="left:804px;top:356px;width:32px;height:24px;background:#f0f0f0;"><span class="t d" style="left:1px;top:2px;font-size:11px;line-height:11px">0</span></div>
<div class="t s" style="left:716px;top:388px;font-size:12px;line-height:12px;">大小</div>
<div class="ed" style="left:756px;top:380px;width:40px;height:24px;background:#fff;"></div>
<div class="ed" style="left:804px;top:380px;width:32px;height:24px;background:#f0f0f0;"><span class="t d" style="left:1px;top:2px;font-size:11px;line-height:11px">0</span></div>
<div class="t s" style="left:716px;top:412px;font-size:12px;line-height:12px;">波色</div>
<div class="ed" style="left:756px;top:404px;width:40px;height:24px;background:#fff;"></div>
<div class="ed" style="left:804px;top:404px;width:32px;height:24px;background:#f0f0f0;"><span class="t d" style="left:1px;top:2px;font-size:11px;line-height:11px">0</span></div>
<div class="t s" style="left:716px;top:436px;font-size:12px;line-height:12px;">五行</div>
<div class="ed" style="left:756px;top:428px;width:40px;height:24px;background:#fff;"></div>
<div class="ed" style="left:804px;top:428px;width:32px;height:24px;background:#f0f0f0;"><span class="t d" style="left:1px;top:2px;font-size:11px;line-height:11px">0</span></div>
<div class="t s" style="left:716px;top:460px;font-size:12px;line-height:12px;">肖位</div>
<div class="ed" style="left:756px;top:452px;width:40px;height:24px;background:#fff;"></div>
<div class="ed" style="left:804px;top:452px;width:32px;height:24px;background:#f0f0f0;"><span class="t d" style="left:1px;top:2px;font-size:11px;line-height:11px">0</span></div>
<div class="t s" style="left:716px;top:484px;font-size:12px;line-height:12px;">大小双</div>
<div class="ed" style="left:756px;top:476px;width:40px;height:24px;background:#fff;"></div>
<div class="ed" style="left:804px;top:476px;width:32px;height:24px;background:#f0f0f0;"><span class="t d" style="left:1px;top:2px;font-size:11px;line-height:11px">0</span></div>
<div class="t s" style="left:716px;top:508px;font-size:12px;line-height:12px;">半头</div>
<div class="ed" style="left:756px;top:500px;width:40px;height:24px;background:#fff;"></div>
<div class="ed" style="left:804px;top:500px;width:32px;height:24px;background:#f0f0f0;"><span class="t d" style="left:1px;top:2px;font-size:11px;line-height:11px">0</span></div>
<div class="t s" style="left:716px;top:532px;font-size:12px;line-height:12px;">三肖</div>
<div class="ed" style="left:756px;top:524px;width:40px;height:24px;background:#fff;"></div>
<div class="ed" style="left:804px;top:524px;width:32px;height:24px;background:#f0f0f0;"><span class="t d" style="left:1px;top:2px;font-size:11px;line-height:11px">0</span></div>
<div class="t s" style="left:716px;top:556px;font-size:12px;line-height:12px;">五肖</div>
<div class="ed" style="left:756px;top:548px;width:40px;height:24px;background:#fff;"></div>
<div class="ed" style="left:804px;top:548px;width:32px;height:24px;background:#f0f0f0;"><span class="t d" style="left:1px;top:2px;font-size:11px;line-height:11px">0</span></div>
<div class="bt s" style="left:708px;top:588px;width:64px;height:24px;font-size:12px;line-height:12px;"><span>保存设置</span></div>
<div class="bt s" style="left:772px;top:588px;width:64px;height:24px;font-size:12px;line-height:12px;"><span>调用设置</span></div>
<div class="bt s" style="left:708px;top:612px;width:128px;height:32px;font-size:12px;line-height:12px;"><span>确定搜索方案开始搜索</span></div>
<div class="bt s" style="left:708px;top:652px;width:64px;height:24px;font-size:12px;line-height:12px;"><span>继续</span></div>
<div class="bt s" style="left:772px;top:652px;width:64px;height:24px;font-size:12px;line-height:12px;"><span>暂停</span></div>
<div class="cb" style="left:716px;top:683px"><svg width="13" height="13" viewBox="0 0 13 13"><path d="M3 5v3l2 2 5-5V2L5 7z" fill="#000"/></svg></div>
<div class="t s" style="left:734px;top:677px;font-size:12px;line-height:12px;line-height:11px;">搜索完毕公式自<br>动追加到数据库</div>
<div class="cb" style="left:716px;top:706px"></div>
<div class="t s" style="left:734px;top:700px;font-size:12px;line-height:12px;line-height:11px;">搜索完毕公式自<br>动更新到数据库</div>
</body></html>
